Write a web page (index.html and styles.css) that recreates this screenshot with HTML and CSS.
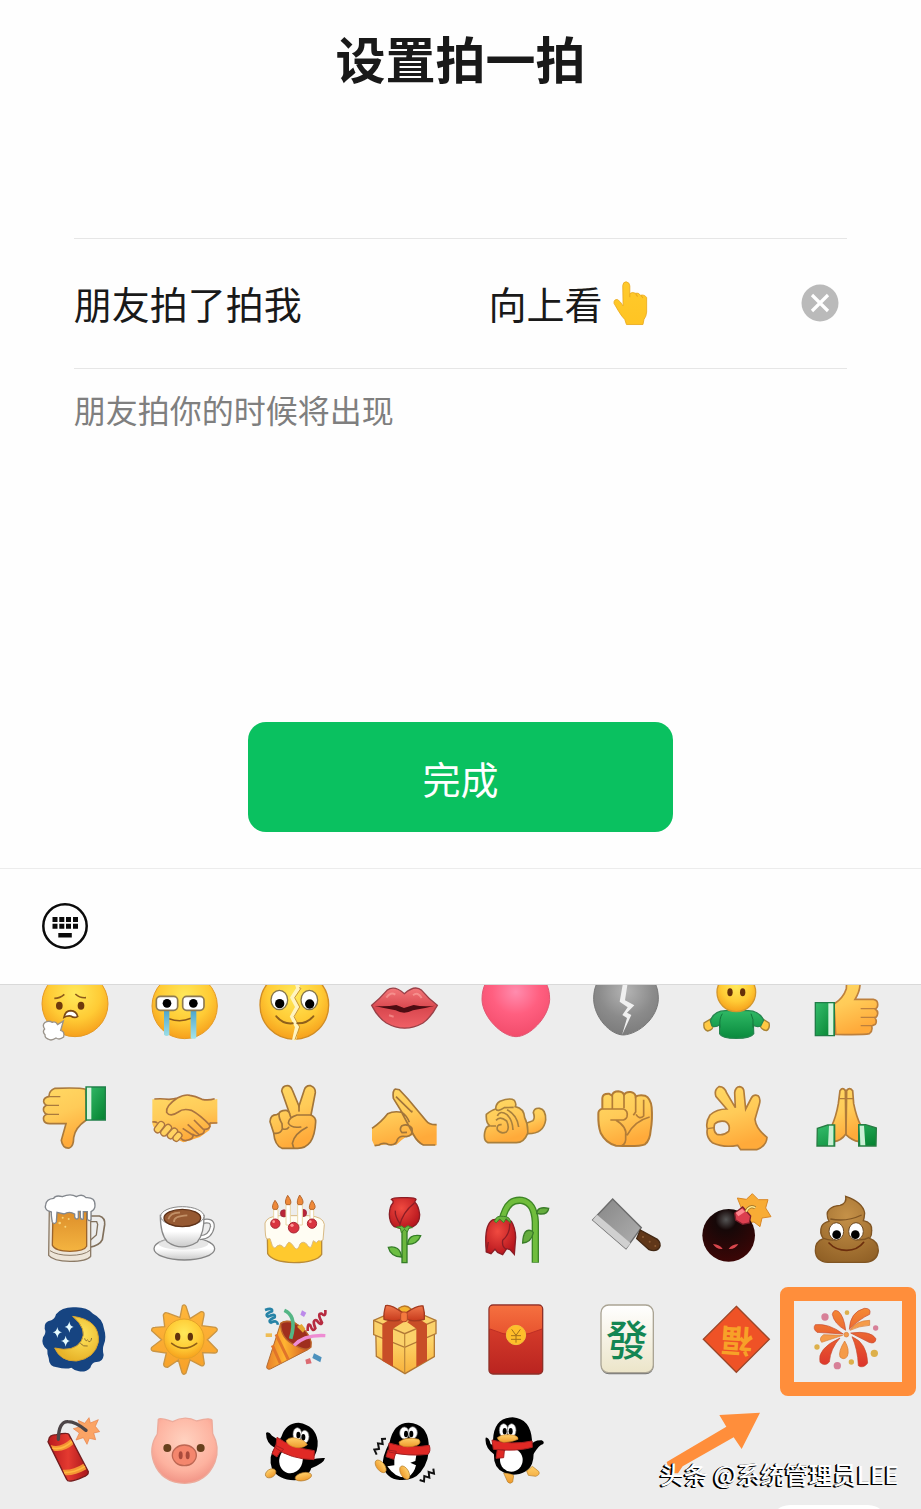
FILE: index.html
```html
<!DOCTYPE html>
<html lang="zh-CN">
<head>
<meta charset="utf-8">
<meta name="viewport" content="width=device-width, initial-scale=1">
<title>设置拍一拍</title>
<link rel="stylesheet" href="styles.css">
</head>
<body>
<svg class="defs" aria-hidden="true">
  <defs>
    <radialGradient id="face" cx=".5" cy=".35" r=".65"><stop offset="0" stop-color="#ffe95a"/><stop offset=".6" stop-color="#ffcb35"/><stop offset="1" stop-color="#f6a01c"/></radialGradient>
    <linearGradient id="skin" x1="0" y1="0" x2=".3" y2="1"><stop offset="0" stop-color="#ffd964"/><stop offset=".5" stop-color="#ffcb58"/><stop offset="1" stop-color="#ffaa3a"/></linearGradient>
    <linearGradient id="point" x1="0" y1="0" x2="0" y2="1"><stop offset="0" stop-color="#ffca2c"/><stop offset="1" stop-color="#ffc423"/></linearGradient>
    <linearGradient id="green" x1="0" y1="0" x2="1" y2="1"><stop offset="0" stop-color="#35bd6c"/><stop offset="1" stop-color="#04812f"/></linearGradient>
    <linearGradient id="shirt" x1="0" y1="0" x2="0" y2="1"><stop offset="0" stop-color="#2fb965"/><stop offset="1" stop-color="#098a3d"/></linearGradient>
    <linearGradient id="tear" x1="0" y1="0" x2="0" y2="1"><stop offset="0" stop-color="#4aa3c9"/><stop offset="1" stop-color="#a5e4ea"/></linearGradient>
    <radialGradient id="heart" cx=".5" cy=".3" r=".7"><stop offset="0" stop-color="#ff8cae"/><stop offset=".5" stop-color="#ff5f80"/><stop offset="1" stop-color="#f24c6b"/></radialGradient>
    <radialGradient id="grey" cx=".5" cy=".3" r=".7"><stop offset="0" stop-color="#b4b4b4"/><stop offset=".6" stop-color="#8b8b8b"/><stop offset="1" stop-color="#7c7c7c"/></radialGradient>
    <linearGradient id="lip" x1="0" y1="0" x2="0" y2="1"><stop offset="0" stop-color="#f4787a"/><stop offset=".5" stop-color="#d9484f"/><stop offset="1" stop-color="#f06066"/></linearGradient>
    <radialGradient id="rose" cx=".4" cy=".35" r=".7"><stop offset="0" stop-color="#f04a40"/><stop offset="1" stop-color="#b5141c"/></radialGradient>
    <linearGradient id="beer" x1="0" y1="0" x2="0" y2="1"><stop offset="0" stop-color="#dd8f2b"/><stop offset="1" stop-color="#f4b440"/></linearGradient>
    <linearGradient id="china" x1="0" y1="0" x2="0" y2="1"><stop offset="0" stop-color="#fff"/><stop offset=".5" stop-color="#fff"/><stop offset="1" stop-color="#c9c9c9"/></linearGradient>
    <linearGradient id="blade" x1="0" y1="0" x2="1" y2="1"><stop offset="0" stop-color="#858585"/><stop offset="1" stop-color="#b0b0b0"/></linearGradient>
    <radialGradient id="bomb" cx=".45" cy=".2" r=".8"><stop offset="0" stop-color="#555"/><stop offset=".25" stop-color="#160808"/><stop offset="1" stop-color="#3c0606"/></radialGradient>
    <radialGradient id="poo" cx=".5" cy=".3" r=".8"><stop offset="0" stop-color="#c59148"/><stop offset="1" stop-color="#8f5f25"/></radialGradient>
    <radialGradient id="moon" cx=".6" cy=".4" r=".6"><stop offset="0" stop-color="#ffe65e"/><stop offset="1" stop-color="#e8b42a"/></radialGradient>
    <linearGradient id="ray" x1="0" y1="0" x2="0" y2="1"><stop offset="0" stop-color="#ffb73c"/><stop offset="1" stop-color="#f7a129"/></linearGradient>
    <linearGradient id="cone" x1="0" y1="0" x2="1" y2="0"><stop offset="0" stop-color="#e8802c"/><stop offset=".4" stop-color="#ffb431"/><stop offset="1" stop-color="#cf511f"/></linearGradient>
    <linearGradient id="gold" x1="0" y1="0" x2="0" y2="1"><stop offset="0" stop-color="#ffe27a"/><stop offset="1" stop-color="#f8b13c"/></linearGradient>
    <linearGradient id="bow" x1="0" y1="0" x2="0" y2="1"><stop offset="0" stop-color="#f0794d"/><stop offset="1" stop-color="#c73a1c"/></linearGradient>
    <linearGradient id="packet" x1="0" y1="0" x2="0" y2="1"><stop offset="0" stop-color="#e2472f"/><stop offset="1" stop-color="#b92420"/></linearGradient>
    <linearGradient id="flap" x1="0" y1="0" x2="0" y2="1"><stop offset="0" stop-color="#f5703f"/><stop offset="1" stop-color="#e8532f"/></linearGradient>
    <linearGradient id="tile" x1="0" y1="0" x2="0" y2="1"><stop offset="0" stop-color="#fff"/><stop offset="1" stop-color="#ece5c9"/></linearGradient>
    <linearGradient id="streak" x1="0" y1="0" x2="0" y2="1"><stop offset="0" stop-color="#f58a35"/><stop offset="1" stop-color="#dd342c"/></linearGradient>
    <linearGradient id="cracker" x1="0" y1="0" x2="1" y2="0"><stop offset="0" stop-color="#b91a1e"/><stop offset=".5" stop-color="#e43a30"/><stop offset="1" stop-color="#a8161b"/></linearGradient>
    <radialGradient id="pig" cx=".5" cy=".35" r=".65"><stop offset="0" stop-color="#ffd2c0"/><stop offset=".7" stop-color="#fdb29f"/><stop offset="1" stop-color="#f19486"/></radialGradient>
    <linearGradient id="beak" x1="0" y1="0" x2="0" y2="1"><stop offset="0" stop-color="#ffd06a"/><stop offset="1" stop-color="#ee9a2c"/></linearGradient>
  </defs>
</svg>

<main class="page">
  <h1 class="title">设置拍一拍</h1>
  <form class="form" onsubmit="return false">
    <div class="row">
      <label class="row-label" for="suffix">朋友拍了拍我</label>
      <div class="row-value">
        <input class="row-input" id="suffix" type="text" value="向上看">
        <svg class="point" viewBox="454 155 110 136" role="img" aria-label="向上指"><path d="M486 171Q487 160 496 160Q506 161 507 172V195Q514 189 524 194Q532 191 539 200Q551 197 557 207V250Q556 263 549 272L546 287H497L492 272Q483 263 474 248L460 224Q459 211 471 213Q479 218 487 232Z" fill="url(#point)" stroke="#e9a91e" stroke-width="2.500"/><path d="M507 195V206M524 195L530 204M540 200L546 208" fill="none" stroke="#e9a91e" stroke-width="3"/></svg>
        <button class="clear" type="button" aria-label="清除"><svg viewBox="0 0 38 38"><circle cx="19" cy="19" r="18.500" fill="#bababa"/><path d="M11 11L27 27M27 11L11 27" stroke="#fff" stroke-width="3.200"/></svg></button>
      </div>
    </div>
    <p class="hint">朋友拍你的时候将出现</p>
    <button class="submit" type="submit">完成</button>
  </form>

  <div class="toolbar">
    <button class="keyboard" type="button" aria-label="键盘"><svg viewBox="0 0 46 46" fill="#0a0a0a"><circle cx="23" cy="23" r="21.700" fill="none" stroke="#0a0a0a" stroke-width="2.500"/><path d="M10.500 14h5v5h-5zM17.300 14h5v5h-5zM24 14h5v5h-5zM31 14h5v5h-5zM10.500 20.700h5v5h-5zM17.300 20.700h5v5h-5zM24 20.700h5v5h-5zM31 20.700h5v5h-5zM16.300 30h13.500v4.500H16.300z"/></svg></button>
  </div>

  <section class="panel" aria-label="表情">
    <div class="grid">
      <button class="emoji" type="button" aria-label="叹气"><svg viewBox="60 2 210 210"><circle cx="165" cy="100" r="99" fill="url(#face)" stroke="#e59a24" stroke-width="3"/><path d="M103 84Q120 84 133 72M166 71Q180 84 198 82" fill="none" stroke="#8d5a1b" stroke-width="5"/><ellipse cx="118" cy="106" rx="10" ry="12" fill="#6f3a0d"/><ellipse cx="183" cy="106" rx="10" ry="12" fill="#6f3a0d"/><path d="M132 141Q136 121 152 121Q169 122 173 138Q165 145 152 137Q140 136 132 141Z" fill="#fff" stroke="#7c4a15" stroke-width="5"/><path d="M130 152L122 180Q135 183 131 200Q119 210 108 203Q94 213 84 206Q74 203 75 193Q66 184 74 176Q66 164 74 157Q86 149 97 156Q106 151 113 163Z" fill="#fff" stroke="#9a938a" stroke-width="4"/></svg></button>
      <button class="emoji" type="button" aria-label="笑哭"><svg viewBox="390 2 210 210"><circle cx="494" cy="107" r="98" fill="url(#face)" stroke="#e59a24" stroke-width="3"/><path d="M447 145Q480 158 513 144" fill="none" stroke="#8d5a1b" stroke-width="5"/><path d="M432 117H448V193Q440 201 432 193ZM512 117H529V203Q520 208 512 203Z" fill="url(#tear)"/><rect x="409" y="78" width="64" height="42" rx="12" fill="#fff" stroke="#8e7a51" stroke-width="5"/><rect x="488" y="78" width="64" height="42" rx="12" fill="#fff" stroke="#8e7a51" stroke-width="5"/><circle cx="441" cy="99" r="13"/><circle cx="520" cy="99" r="13"/></svg></button>
      <button class="emoji" type="button" aria-label="裂开"><svg viewBox="61 2 210 210"><circle cx="164" cy="104" r="103" fill="url(#face)" stroke="#d08d25" stroke-width="4"/><path d="M168 30L176 54L158 82L173 110L157 139L172 170L163 210" fill="none" stroke="#fff4c0" stroke-width="12"/><path d="M178 52L184 54L165 82L180 110L163 139L180 170L166 208" fill="none" stroke="#c99635" stroke-width="3"/><path d="M110 138Q130 162 159 159M173 159Q202 160 221 138" fill="none" stroke="#90601b" stroke-width="6" stroke-linecap="round"/><ellipse cx="119" cy="89" rx="25" ry="29" fill="#fff" stroke="#83744c" stroke-width="4"/><ellipse cx="209" cy="89" rx="25" ry="29" fill="#fff" stroke="#83744c" stroke-width="4"/><circle cx="120" cy="100" r="14"/><circle cx="210" cy="101" r="14"/></svg></button>
      <button class="emoji" type="button" aria-label="嘴唇"><svg viewBox="391 2 210 210"><path d="M396 105Q421 84 442 60Q464 43 494 70Q526 42 546 60Q568 86 593 105Q573 142 550 158Q495 189 440 158Q414 141 396 105Z" fill="url(#lip)" stroke="#9a4148" stroke-width="4"/><path d="M405 107Q440 110 470 104L493 113L522 104Q550 110 586 106Q550 115 520 120Q493 134 468 120Q440 115 405 107Z" fill="#4c0c12"/><path d="M440 82Q453 63 467 73M520 75Q535 63 546 83M448 135L462 139" fill="none" stroke="#ffb3ac" stroke-width="6" opacity=".5"/></svg></button>
      <button class="emoji" type="button" aria-label="爱心"><svg viewBox="62 2 210 210"><path d="M167 30C140-14 64 4 65 88C67 142 126 199 167 199C208 199 265 142 268 88C269 4 195-14 167 30Z" fill="url(#heart)" stroke="#e15773" stroke-width="3"/></svg></button>
      <button class="emoji" type="button" aria-label="心碎"><svg viewBox="392 2 210 210"><path d="M497 30C470-14 398 4 400 88C402 142 450 194 490 194C538 190 591 142 594 88C596 4 525-14 497 30Z" fill="url(#grey)" stroke="#777" stroke-width="3"/><path d="M488 38L478 94L502 111L486 134L500 143L485 194L513 134L500 127L522 105L494 90L502 38Z" fill="#f0f0f0"/></svg></button>
      <button class="emoji" type="button" aria-label="转圈"><svg viewBox="62 2 210 210"><path d="M93 145L71 158Q68 177 82 182Q101 178 99 161ZM244 144L266 158Q270 175 258 181Q239 177 239 162Z" fill="#ffc943" stroke="#a98334" stroke-width="4"/><path d="M90 151Q102 121 135 121H204Q236 122 250 149L241 167Q230 172 219 164L220 190Q212 204 168 204Q124 204 118 190V163Q106 172 95 167Z" fill="url(#shirt)" stroke="#25864f" stroke-width="4"/><path d="M126 130Q116 145 119 172M212 130Q221 145 218 172" fill="none" stroke="#12773b" stroke-width="3"/><circle cx="168" cy="66" r="58" fill="url(#face)" stroke="#d3972d" stroke-width="4"/><ellipse cx="149" cy="66" rx="8" ry="12" fill="#663009"/><ellipse cx="187" cy="66" rx="8" ry="12" fill="#663009"/></svg></button>
      <button class="emoji" type="button" aria-label="强"><svg viewBox="393 2 210 210"><path d="M462 101Q490 83 499 55L500 26Q525 10 540 34Q542 60 525 87H580Q593 89 593 101Q594 112 586 116Q596 124 592 134Q590 141 585 142Q592 154 586 162L575 167Q579 182 568 190Q550 194 467 192Z" fill="url(#skin)" stroke="#bd803d" stroke-width="5"/><path d="M542 115H586M542 141H586M542 166H578" stroke="#bd803d" stroke-width="4"/><path d="M406 97H463V196H406Z" fill="url(#green)" stroke="#207c47" stroke-width="4"/><path d="M445 99H460V194H445Z" fill="#d7f5e0"/></svg></button>

      <button class="emoji" type="button" aria-label="弱"><svg viewBox="60 335 210 210"><path d="M197 357Q180 351 105 354Q87 361 87 378Q70 382 71 394Q72 402 79 405Q68 411 71 422Q74 430 80 432Q68 437 71 449Q74 460 89 460H138L124 510Q128 535 148 533Q161 528 161 502Q165 472 199 449Z" fill="url(#skin)" stroke="#aa7a3d" stroke-width="5"/><path d="M85 379H121M80 405H117M80 432H117" stroke="#aa7a3d" stroke-width="4"/><path d="M198 350H256V449H198Z" fill="url(#green)" stroke="#218049" stroke-width="4"/><path d="M201 352H214V447H201Z" fill="#d9f3e0"/></svg></button>
      <button class="emoji" type="button" aria-label="握手"><svg viewBox="390 335 210 210"><path d="M397 387Q430 385 447 387L472 383L495 374Q515 373 546 387Q566 392 592 386V458L573 462L568 480L540 500L515 508L490 516L410 478Q396 469 397 456Z" fill="url(#skin)"/><path d="M397 455Q407 453 412 458M592 458H571Q566 460 570 469Q564 479 552 477Q556 489 540 493Q530 500 520 493Q519 507 504 509Q490 514 483 504M550 477L522 449M537 493L503 462M518 494L488 474M403 386Q425 384 447 387Q462 386 472 383Q495 371 510 375Q525 377 546 387Q566 391 584 385M472 383Q436 407 440 426Q450 442 475 425Q489 413 514 420Q539 433 571 466" fill="none" stroke="#ab7440" stroke-width="5"/><g fill="#ffd261" stroke="#ab7440" stroke-width="4"><rect x="400" y="461" width="37" height="20" rx="10" transform="rotate(-53 418 471)"/><rect x="419" y="470" width="39" height="20" rx="10" transform="rotate(-50 438 480)"/><rect x="439" y="480" width="36" height="19" rx="9" transform="rotate(-48 457 489)"/><rect x="457" y="490" width="30" height="19" rx="9" transform="rotate(-48 472 499)"/></g></svg></button>
      <button class="emoji" type="button" aria-label="胜利"><svg viewBox="61 335 210 210"><path d="M126 362Q128 346 143 346Q153 346 158 359L178 407L194 358Q199 344 213 346Q228 351 227 367L214 434Q229 441 228 455Q226 495 212 515Q198 534 174 534H127Q105 525 102 488L91 454Q92 433 111 433L118 429Q122 419 140 420L148 425Z" fill="url(#skin)" stroke="#a2753a" stroke-width="5"/><path d="M148 425L154 443M178 407V422M118 431Q117 443 127 460L128 475Q124 491 105 489M128 475Q142 480 147 471M214 434H172Q147 442 146 458Q153 474 183 470M202 471Q164 490 158 519L162 533" fill="none" stroke="#a2753a" stroke-width="5" stroke-linecap="round"/></svg></button>
      <button class="emoji" type="button" aria-label="抱拳"><svg viewBox="391 335 210 210"><path d="M397 474Q430 445 444 430Q460 421 486 426L462 389Q456 366 467 356L481 359L570 461L591 464V525H551Q530 516 520 495L502 498Q482 511 470 523L449 520L432 523L405 527L397 510Z" fill="url(#skin)"/><path d="M397 474Q426 454 444 430Q462 421 487 426L461 384Q458 360 467 356L479 358L505 386L560 452Q569 464 591 463M469 379L508 417Q519 430 516 421M486 426L522 494Q534 516 551 524H587M405 526L418 524Q430 515 448 523Q470 526 473 508Q480 494 500 499Q522 496 517 474Q505 459 487 466Q477 477 487 487L502 486M487 426Q502 436 509 456" fill="none" stroke="#a2753a" stroke-width="5"/></svg></button>
      <button class="emoji" type="button" aria-label="勾引"><svg viewBox="62 335 210 210"><path d="M198 459L218 451Q225 443 219 427Q221 412 238 414Q257 417 256 449Q250 492 199 490Z" fill="url(#skin)" stroke="#a9803d" stroke-width="5"/><path d="M78 432Q94 419 106 416Q106 401 119 393Q149 381 162 390Q169 401 165 409Q191 414 193 442Q204 463 202 489Q190 519 165 517H83Q69 511 73 487Q77 465 90 467Q76 460 78 432Z" fill="url(#skin)" stroke="#a9803d" stroke-width="5"/><path d="M107 416Q110 426 132 412L160 411M90 467H107M107 450Q119 436 139 452Q149 474 138 485Q121 492 111 478Q108 462 124 463M111 437Q119 418 140 433Q157 450 158 479M140 418Q171 434 175 470" fill="none" stroke="#a9803d" stroke-width="5"/></svg></button>
      <button class="emoji" type="button" aria-label="拳头"><svg viewBox="392 335 210 210"><path d="M426 415V383Q427 369 446 370L455 376Q458 363 474 363Q487 364 491 373Q498 363 511 365Q525 368 526 379Q535 373 554 376Q571 384 574 411Q577 448 571 480Q569 510 554 522Q535 530 467 526Q437 519 421 488Q413 466 414 431Q413 419 426 415Z" fill="url(#skin)" stroke="#b27c37" stroke-width="6"/><path d="M456 376V414M491 373V413M526 379V425L519 435M426 416H490Q504 422 500 439Q496 450 481 449H450M467 450Q502 470 496 500Q498 520 484 526M568 440Q522 452 500 495M527 432Q537 449 550 437V388" fill="none" stroke="#b27c37" stroke-width="5"/></svg></button>
      <button class="emoji" type="button" aria-label="OK"><svg viewBox="62 335 210 210"><path fill-rule="evenodd" d="M139 416L107 379Q100 359 116 349Q132 348 139 368L165 412L163 367Q166 349 178 349Q191 351 191 366L196 416L213 383Q220 371 233 376Q242 384 237 402L224 447Q227 475 260 501Q259 527 229 538H181L172 525Q130 533 96 517Q76 500 81 476Q75 456 89 434Q109 416 139 416ZM103 461Q97 483 110 492Q129 497 145 483Q152 462 133 453Q114 450 103 461Z" fill="url(#skin)" stroke="#b17c3b" stroke-width="5"/><path d="M81 475L103 472" stroke="#b17c3b" stroke-width="4"/></svg></button>
      <button class="emoji" type="button" aria-label="合十"><svg viewBox="393 335 210 210"><path d="M498 493L496 361Q488 349 480 361L475 400Q468 440 455 467L461 514Q484 511 498 490ZM498 493L500 361Q508 349 518 361L521 400Q529 440 543 467L537 514Q516 511 498 493Z" fill="url(#skin)" stroke="#b17c3b" stroke-width="5"/><path d="M478 385H520M498 357V493" stroke="#b17c3b" stroke-width="4"/><path d="M412 474L443 464H464V527H411ZM589 473L557 463H536V527H588Z" fill="url(#green)" stroke="#287d43" stroke-width="4"/><path d="M447 466H460V525H444ZM539 466H552L556 525H541Z" fill="#cbefd5"/></svg></button>

      <button class="emoji" type="button" aria-label="啤酒"><svg viewBox="60 38 210 210"><path d="M211 107H238Q256 112 254 133L247 178Q239 196 207 201" fill="none" stroke="#81705c" stroke-width="5"/><path d="M213 124H230L233 132L229 164L211 180" fill="none" stroke="#81705c" stroke-width="4"/><path d="M88 85H212V228Q201 243 150 243Q99 242 86 225Z" fill="#ede5d8" stroke="#8c7b67" stroke-width="4"/><path d="M99 94H200V198Q193 213 150 213Q105 213 97 195Z" fill="url(#beer)" stroke="#9b642c" stroke-width="4"/><path d="M90 211Q111 225 150 225Q192 225 210 210" fill="none" stroke="#8c7b67" stroke-width="3"/><path d="M85 92Q73 85 77 73Q79 56 101 54Q107 43 127 49Q152 38 169 49Q187 39 198 52Q226 50 225 76Q225 87 213 94V118Q206 125 202 115V94H190V115Q185 120 181 112V93H175V112Q171 121 164 111V101Q148 91 132 101L111 96L109 125Q103 134 97 125Q93 105 94 95Z" fill="#fff" stroke="#83878d" stroke-width="4"/><g fill="#f9d477"><circle cx="128" cy="112" r="3"/><circle cx="146" cy="116" r="3"/><circle cx="119" cy="128" r="4"/><circle cx="136" cy="139" r="3"/></g></svg></button>
      <button class="emoji" type="button" aria-label="咖啡"><svg viewBox="390 38 210 210"><ellipse cx="493" cy="205" rx="91" ry="34" fill="url(#china)" stroke="#858585" stroke-width="4"/><ellipse cx="490" cy="190" rx="75" ry="18" fill="#d5d5d5" opacity=".6"/><path d="M546 124Q579 116 577 139Q572 170 540 172" fill="none" stroke="#858585" stroke-width="15"/><path d="M546 124Q579 116 577 139Q572 170 540 172" fill="none" stroke="#fff" stroke-width="8"/><path d="M421 105Q421 163 442 184Q484 215 532 185Q553 160 552 105Z" fill="url(#china)" stroke="#888" stroke-width="4"/><ellipse cx="487" cy="108" rx="65" ry="29" fill="#fff" stroke="#888" stroke-width="3"/><ellipse cx="487" cy="113" rx="55" ry="26" fill="#965932" stroke="#5e3219" stroke-width="4"/><path d="M445 117Q451 96 480 97M462 125Q460 107 502 105" fill="none" stroke="#dfb58b" stroke-width="5" opacity=".6"/></svg></button>
      <button class="emoji" type="button" aria-label="蛋糕"><svg viewBox="61 38 210 210"><path d="M83 170H246V222Q230 246 163 247Q98 245 84 220Z" fill="#ffc92e" stroke="#b98b37" stroke-width="4"/><path d="M76 128Q82 108 120 106H207Q251 109 254 132L250 179Q243 184 236 181L230 187L221 181L215 199Q208 205 202 192Q190 180 181 191Q175 211 166 204Q160 194 153 188Q148 181 142 192Q135 208 129 198Q121 190 112 197Q105 209 98 196L91 175L82 176Q76 176 76 128Z" fill="#fffdf3" stroke="#d9ba84" stroke-width="3"/><g fill="#b92539" stroke="#932238" stroke-width="2"><circle cx="133" cy="99" r="11"/><circle cx="190" cy="98" r="11"/></g><g fill="#fff" stroke="#ead8a7" stroke-width="3"><path d="M102 88H115V121H102ZM139 72H152V134H139ZM174 72H188V134H174ZM211 88H222V121H211Z"/></g><g fill="#ef8939" stroke="#b66930" stroke-width="3"><path d="M106 60Q94 79 101 87H112Q121 78 106 60ZM144 45Q133 65 140 73H151Q159 65 144 45ZM180 44Q169 64 175 73H187Q196 65 180 44ZM217 60Q205 79 211 87H223Q232 79 217 60Z"/></g><g fill="#d93440" stroke="#a72936" stroke-width="3"><circle cx="107" cy="130" r="14"/><circle cx="162" cy="142" r="16"/><circle cx="217" cy="130" r="14"/></g><g fill="#ff9a98"><circle cx="102" cy="124" r="4"/><circle cx="157" cy="135" r="5"/><circle cx="212" cy="124" r="4"/></g></svg></button>
      <button class="emoji" type="button" aria-label="玫瑰"><svg viewBox="391 38 210 210"><path d="M487 145H502V247H487Z" fill="#6db73e" stroke="#347d27" stroke-width="4"/><path d="M504 192Q506 160 543 166Q533 192 504 192ZM486 230Q453 229 446 201Q480 194 486 230Z" fill="#6dbe43" stroke="#347d27" stroke-width="4"/><path d="M460 61L455 57Q459 51 494 52Q527 51 529 57L525 65Q537 76 540 103Q540 128 520 139Q496 150 464 139Q449 128 449 102Q450 78 460 68Z" fill="url(#rose)" stroke="#8b1d25" stroke-width="4"/><path d="M524 68Q488 97 480 136M467 91Q465 108 482 132" fill="none" stroke="#8b1d25" stroke-width="4"/><path d="M469 141L486 137L494 143L505 136L518 142L508 143L503 155L494 147L485 157L482 144Z" fill="#6dbc45" stroke="#3f8329" stroke-width="3"/></svg></button>
      <button class="emoji" type="button" aria-label="凋谢"><svg viewBox="62 38 210 210"><path d="M124 125C137 62 163 58 184 60C212 66 223 87 225 125V247" fill="none" stroke="#3e8626" stroke-width="22"/><path d="M124 125C137 62 163 58 184 60C212 66 223 87 225 125V245" fill="none" stroke="#70bd3c" stroke-width="14"/><path d="M229 99Q231 77 265 84Q263 102 240 101ZM215 152Q189 140 187 188Q213 186 219 157Z" fill="#65ad3d" stroke="#3b7d29" stroke-width="4"/><path d="M96 119Q129 111 153 123Q165 142 166 171L162 222L149 208L139 205L127 223L112 216L104 207L92 220L78 215Q70 135 96 119Z" fill="url(#rose)" stroke="#8b1d25" stroke-width="4"/><path d="M148 130Q150 160 127 180Q124 200 138 207M84 185Q81 201 78 214" fill="none" stroke="#8b1d25" stroke-width="4"/><path d="M102 123Q108 104 129 108Q151 108 151 128L137 115L130 127L118 116L108 127Z" fill="#6ab63b" stroke="#3d7d29" stroke-width="3"/></svg></button>
      <button class="emoji" type="button" aria-label="菜刀"><svg viewBox="392 38 210 210"><path d="M457 56L543 142L497 205L397 119Z" fill="url(#blade)" stroke="#6c6c6c" stroke-width="4"/><path d="M397 119L410 103L511 189L497 205Z" fill="#d0d0d0"/><path d="M540 149L591 177Q604 190 597 202Q588 216 566 208L529 175Z" fill="#603719" stroke="#422814" stroke-width="4"/><g fill="#8d5c34"><circle cx="548" cy="170" r="3"/><circle cx="568" cy="184" r="3"/><circle cx="585" cy="197" r="3"/></g></svg></button>
      <button class="emoji" type="button" aria-label="炸弹"><svg viewBox="62 38 210 210"><path d="M171 53L198 57L216 40L234 58L263 58L256 83L272 109L245 113L239 139L221 125L190 128L190 100Z" fill="#f8ac35" stroke="#d98828" stroke-width="3"/><circle cx="145" cy="165" r="79" fill="url(#bomb)"/><path d="M163 99L187 80L211 107L207 128L187 132L166 119Z" fill="#dc3f4f" stroke="#7d202b" stroke-width="4"/><path d="M166 97L185 85L194 94L174 108Z" fill="#ff8890"/><path d="M197 94Q206 73 225 82" fill="none" stroke="#8e6a27" stroke-width="9"/><path d="M197 94Q206 73 225 82" fill="none" stroke="#ffe78c" stroke-width="5"/><path d="M98 191Q119 193 127 206Q108 208 98 191ZM174 191Q153 193 145 206Q164 208 174 191Z" fill="#d9474d"/></svg></button>
      <button class="emoji" type="button" aria-label="便便"><svg viewBox="393 38 210 210"><path d="M447 123Q436 99 447 88Q458 76 480 75Q501 69 497 48Q549 66 554 98Q553 113 550 121Q577 126 575 151Q576 165 569 174Q595 183 595 211Q592 244 555 246H444Q407 243 406 211Q405 183 430 175Q417 157 425 138Q430 127 447 123Z" fill="url(#poo)" stroke="#805523" stroke-width="4"/><path d="M451 116Q499 126 545 104M431 174Q450 182 470 178M528 178Q552 181 568 171" fill="none" stroke="#805523" stroke-width="4"/><ellipse cx="469" cy="153" rx="22" ry="26" fill="#fff" stroke="#6c4922" stroke-width="3"/><ellipse cx="528" cy="153" rx="22" ry="26" fill="#fff" stroke="#6c4922" stroke-width="3"/><circle cx="470" cy="163" r="13"/><circle cx="526" cy="163" r="13"/><path d="M447 188Q467 210 500 210Q533 210 551 186" fill="none" stroke="#6c2e0d" stroke-width="5" stroke-linecap="round"/></svg></button>

      <button class="emoji" type="button" aria-label="月亮"><svg viewBox="60 371 210 210"><path d="M108 402Q126 379 165 381Q200 380 219 400Q248 414 252 445Q260 470 252 491Q246 507 251 524Q249 546 228 545Q215 547 211 562Q197 577 177 573Q164 571 154 562Q138 568 111 561Q87 560 86 533Q81 518 82 508Q62 494 69 471Q80 457 74 445Q71 424 94 420Q105 415 108 402Z" fill="#164481"/><path d="M158 408Q204 447 184 482Q161 517 104 503Q121 543 169 542Q224 534 235 486Q241 419 158 408Z" fill="url(#moon)" stroke="#d6a32f" stroke-width="3"/><path d="M194 474Q197 486 203 478M203 480Q211 491 215 473M181 489Q190 500 203 497" fill="none" stroke="#8e702f" stroke-width="3"/><path d="M148 423Q149 438 161 440Q150 442 148 457Q146 442 134 440Q146 438 148 423ZM112 440Q114 454 126 456Q114 458 112 473Q110 458 98 456Q110 454 112 440ZM137 466Q139 480 150 482Q139 484 137 499Q135 484 123 482Q135 480 137 466Z" fill="#e5fbff"/></svg></button>
      <button class="emoji" type="button" aria-label="太阳"><svg viewBox="390 371 210 210"><path d="M480 412L487 377Q493 370 498 378L510 415L543 394Q554 393 552 405L546 436L586 441Q595 446 590 452L562 478L592 509Q593 518 583 518L548 517L553 550Q551 559 543 556L510 539L498 578Q491 586 486 577L475 539L443 561Q431 561 431 551L439 518L398 512Q391 509 395 501L425 478L395 451Q394 441 405 441L434 439L430 404Q434 394 442 398Z" fill="url(#ray)" stroke="#ca9544" stroke-width="4"/><circle cx="492" cy="476" r="60" fill="url(#face)" stroke="#e4a129" stroke-width="3"/><ellipse cx="473" cy="469" rx="8" ry="12" fill="#62320c"/><ellipse cx="511" cy="469" rx="8" ry="12" fill="#62320c"/><path d="M455 489Q492 518 530 489" fill="none" stroke="#905f18" stroke-width="5" stroke-linecap="round"/></svg></button>
      <button class="emoji" type="button" aria-label="庆祝"><svg viewBox="61 371 210 210"><path d="M123 429Q135 417 165 426Q215 463 214 488Q215 500 205 508L92 566Q81 569 81 559Z" fill="url(#cone)" stroke="#b36b30" stroke-width="3"/><path d="M123 429Q122 476 168 496Q202 515 214 500Q219 468 185 440Q147 414 123 429Z" fill="#9f2f1e" stroke="#bd672c" stroke-width="4"/><path d="M109 462L146 538M98 495L122 549" stroke="#e0742a" stroke-width="9"/><path d="M153 475Q165 436 157 414Q151 397 134 390" fill="none" stroke="#54b685" stroke-width="11"/><path d="M163 495Q195 462 257 466" fill="none" stroke="#ee8cd3" stroke-width="10"/><path d="M76 389Q100 381 97 393Q73 402 85 409Q109 397 105 411Q82 421 94 427Q112 417 115 433" fill="none" stroke="#2783a6" stroke-width="8"/><path d="M204 452Q203 426 212 435Q219 457 227 444Q216 416 231 420Q244 437 247 427Q231 397 246 400Q259 413 257 389" fill="none" stroke="#b62b40" stroke-width="8"/><path d="M187 390L200 397L193 410L182 403Z" fill="#bc8aea"/><path d="M78 459H97V470H78Z" fill="#efbd55"/><path d="M172 439L186 431L197 445L190 457Z" fill="#e5a733"/><path d="M223 519L246 531L242 546L218 533Z" fill="#4c91bd"/><path d="M197 538L211 533L216 549L200 552Z" fill="#dc6b72"/></svg></button>
      <button class="emoji" type="button" aria-label="礼物"><svg viewBox="391 371 210 210"><path d="M408 440L495 480L584 440V529L496 580L410 528Z" fill="url(#gold)" stroke="#b17936" stroke-width="4"/><path d="M402 420L495 380L589 420V460L495 501L402 463Z" fill="#fbd26a" stroke="#b17936" stroke-width="4"/><path d="M402 420L495 460L589 420" fill="none" stroke="#b17936" stroke-width="4"/><path d="M428 431L462 411L492 425L460 445V559L428 541ZM530 445L502 425L530 411L562 431V541L530 559Z" fill="#c84e27"/><path d="M495 460V578" stroke="#c28d3c" stroke-width="4"/><path d="M477 384Q497 369 514 386L503 399H484Z" fill="#f3b42f" stroke="#b87529" stroke-width="4"/><path d="M489 397Q451 370 438 376Q431 400 433 417Q467 426 486 417ZM500 397Q534 373 550 377Q556 399 554 417Q521 426 502 417Z" fill="url(#bow)" stroke="#a33a20" stroke-width="4"/><rect x="483" y="395" width="20" height="29" rx="7" fill="#f4793e" stroke="#b34825" stroke-width="3"/></svg></button>
      <button class="emoji" type="button" aria-label="红包"><svg viewBox="62 371 210 210"><rect x="86" y="374" width="161" height="207" rx="12" fill="url(#packet)" stroke="#8d3028" stroke-width="4"/><path d="M88 445V386Q88 376 98 376H235Q245 376 245 386V445Q167 483 88 445Z" fill="url(#flap)"/><path d="M89 446Q167 483 245 446" fill="none" stroke="#bd2d24" stroke-width="3"/><circle cx="167" cy="464" r="29" fill="#ffbe2a" stroke="#f3c03b" stroke-width="3"/><path d="M154 447L167 465L180 447M152 466H182M152 477H182M167 465V487" fill="none" stroke="#a5711b" stroke-width="3"/></svg></button>
      <button class="emoji" type="button" aria-label="发"><svg viewBox="392 371 210 210"><rect x="422" y="375" width="158" height="207" rx="24" fill="#777"/><rect x="422" y="374" width="157" height="203" rx="23" fill="url(#tile)" stroke="#aaa494" stroke-width="4"/><text class="tile-text" x="500" y="526" text-anchor="middle">發</text></svg></button>
      <button class="emoji" type="button" aria-label="福"><svg viewBox="62 371 210 210"><path d="M168 378L267 477L168 576L69 477Z" fill="#ef5226" stroke="#9b472a" stroke-width="4"/><text class="fu-text" x="166" y="510" text-anchor="middle" transform="rotate(184 168 478)">福</text></svg></button>
      <button class="emoji marked" type="button" aria-label="烟花"><svg viewBox="393 371 210 210"><g fill="url(#streak)" stroke="#c64a2e" stroke-width="2"><path d="M497 450Q462 430 457 402Q461 385 475 393Q492 407 497 450ZM508 447Q510 395 553 384Q575 383 569 402Q541 414 508 447ZM490 461L411 456Q397 444 406 433Q445 428 490 461ZM480 473Q451 505 448 545Q435 560 420 546Q410 505 480 473ZM516 469Q561 487 563 548Q550 566 535 556Q533 506 516 469ZM512 458Q572 450 588 475Q586 493 567 486Z"/></g><g fill="#f59b49" stroke="#d67832" stroke-width="2"><path d="M488 465L425 486Q415 473 431 463ZM510 450Q529 420 569 420V435Q536 437 510 450ZM494 482Q510 508 502 528Q492 541 480 530Q474 514 494 482Z"/><circle cx="499" cy="463" r="7"/></g><g fill="#d78098"><circle cx="435" cy="410" r="11"/><circle cx="587" cy="443" r="8"/><circle cx="472" cy="556" r="11"/></g><g fill="#ddb04b"><circle cx="501" cy="397" r="7"/><circle cx="411" cy="500" r="8"/><circle cx="514" cy="545" r="8"/><circle cx="583" cy="519" r="11"/></g></svg></button>

      <button class="emoji" type="button" aria-label="爆竹"><svg viewBox="60 704 210 210"><path d="M207 712L211 728L235 718L226 738L239 754L221 758L227 778L208 774L201 792L190 772L168 779L178 758L160 745L181 739L174 720L194 729Z" fill="#fba465" stroke="#e77e45" stroke-width="2"/><path d="M86 780Q87 763 109 763Q145 755 147 763L205 874Q206 886 187 891Q144 910 140 897L84 784Z" fill="url(#cracker)" stroke="#741d1e" stroke-width="4"/><path d="M92 794Q122 804 152 776L160 792Q134 816 101 811ZM128 868Q158 871 190 850L199 867Q166 886 136 885Z" fill="#f49634"/><path d="M97 803Q126 811 156 784M132 877Q165 877 195 858" fill="none" stroke="#ffb93f" stroke-width="5"/><path d="M115 777Q116 723 144 724Q166 724 198 750" fill="none" stroke="#4d4547" stroke-width="10" stroke-linecap="round"/></svg></button>
      <button class="emoji" type="button" aria-label="猪头"><svg viewBox="390 704 210 210"><path d="M412 761L415 717Q420 711 458 724Q494 704 530 722Q572 710 576 720L578 760Q601 801 585 845Q560 907 494 909Q425 907 402 847Q385 801 412 761Z" fill="url(#pig)" stroke="#edab9b" stroke-width="4"/><circle cx="442" cy="803" r="12" fill="#67401d"/><circle cx="542" cy="803" r="12" fill="#67401d"/><ellipse cx="493" cy="825" rx="36" ry="31" fill="#f4866d" stroke="#bd6753" stroke-width="4"/><ellipse cx="482" cy="825" rx="6" ry="12" fill="#a94a3c"/><ellipse cx="503" cy="825" rx="6" ry="12" fill="#a94a3c"/></svg></button>
      <button class="emoji" type="button" aria-label="跳跳"><svg viewBox="61 704 210 210"><path d="M105 802Q79 789 79 758Q86 751 97 766L118 780ZM213 838Q235 832 256 833Q253 850 211 865Z"/><path d="M125 769Q139 727 177 727Q228 735 234 782Q236 814 218 836Q221 885 174 899Q119 903 97 865Q84 827 109 796Z"/><ellipse cx="154" cy="839" rx="35" ry="40" fill="#fff" transform="rotate(15 154 839)"/><path d="M112 771Q155 802 224 811L223 838Q151 836 108 803ZM108 795L132 807Q116 818 112 830L97 820Z" fill="#e02925" stroke="#a91f20" stroke-width="3"/><g fill="#fff" stroke="#777" stroke-width="2"><ellipse cx="173" cy="762" rx="13" ry="20"/><ellipse cx="195" cy="769" rx="13" ry="19"/></g><ellipse cx="176" cy="764" rx="6" ry="10"/><ellipse cx="191" cy="771" rx="6" ry="10"/><path d="M139 781Q151 767 174 775Q195 779 203 793Q185 808 160 799Q143 793 139 781Z" fill="url(#beak)" stroke="#d58b28" stroke-width="2"/><ellipse cx="93" cy="879" rx="17" ry="12" transform="rotate(-32 93 879)" fill="url(#beak)" stroke="#ad7729" stroke-width="2"/><ellipse cx="191" cy="889" rx="25" ry="12" transform="rotate(-12 191 889)" fill="url(#beak)" stroke="#ad7729" stroke-width="2"/></svg></button>
      <button class="emoji" type="button" aria-label="发抖"><svg viewBox="391 704 210 210"><path d="M450 785Q462 727 507 727Q563 731 567 789Q572 840 543 875Q521 902 480 899Q439 895 430 856Q426 831 450 785Z"/><path d="M464 820L530 824L527 842L512 847L529 855Q524 878 506 890Q469 897 443 858L464 855Z" fill="#fff"/><path d="M448 788Q506 806 569 795Q574 813 565 822Q510 829 448 815ZM445 809L470 813L462 837L439 829Z" fill="#e02925" stroke="#a91f20" stroke-width="3"/><g fill="#fff" stroke="#777" stroke-width="2"><ellipse cx="494" cy="758" rx="14" ry="18"/><ellipse cx="519" cy="757" rx="14" ry="18"/></g><ellipse cx="499" cy="761" rx="6" ry="10"/><ellipse cx="515" cy="761" rx="6" ry="10"/><path d="M478 785Q500 767 537 777Q547 788 532 795Q500 805 480 793Z" fill="url(#beak)" stroke="#d58b28" stroke-width="2"/><ellipse cx="423" cy="858" rx="22" ry="12" transform="rotate(52 423 858)" fill="url(#beak)" stroke="#b57d28" stroke-width="2"/><ellipse cx="495" cy="877" rx="22" ry="12" transform="rotate(61 495 877)" fill="url(#beak)" stroke="#b57d28" stroke-width="2"/><path d="M439 775L427 776L429 791L415 789L418 806L404 808L411 823M540 899L553 903L554 887L569 892L567 875L583 880L581 865" fill="none" stroke="#111" stroke-width="6"/></svg></button>
      <button class="emoji" type="button" aria-label="转圈圈"><svg viewBox="62 704 210 210"><path d="M101 822Q72 801 76 772Q85 770 91 791L108 799ZM209 797Q219 779 244 780Q254 784 248 792Q239 790 219 822Z"/><path d="M98 780Q100 712 157 711Q210 715 215 779Q225 823 215 850Q202 882 156 883Q109 877 102 841Z"/><ellipse cx="153" cy="839" rx="34" ry="35" fill="#fff"/><path d="M95 779Q154 795 215 782L216 801Q172 814 99 807ZM111 807L132 810L130 832L107 834Z" fill="#e02925" stroke="#a91f20" stroke-width="3"/><g fill="#fff" stroke="#777" stroke-width="2"><ellipse cx="130" cy="750" rx="13" ry="20"/><ellipse cx="154" cy="750" rx="13" ry="20"/></g><ellipse cx="133" cy="753" rx="6" ry="10"/><ellipse cx="151" cy="753" rx="6" ry="10"/><path d="M111 772Q126 759 162 765Q175 769 173 777Q155 786 130 786Q114 783 111 772Z" fill="url(#beak)" stroke="#d58b28" stroke-width="2"/><path d="M130 878Q156 881 160 886L157 905Q149 913 142 905ZM199 872L216 858L235 873Q241 883 226 888L204 885Z" fill="url(#beak)" stroke="#b57d28" stroke-width="2"/></svg></button>
    </div>
    <svg class="arrow" viewBox="30 30 300 198" aria-hidden="true"><path d="M330 38L208 45L229 80L50 186L60 220H84L98 199L251 112L275 147Z" fill="#ff8e3b"/></svg>
    <p class="watermark">头条 @系统管理员LEE</p>
    <span class="pill"></span>
  </section>
</main>
</body>
</html>
```

FILE: styles.css
```css
* {
  box-sizing: border-box;
}

body {
  margin: 0;
  background: #fefefe;
  color: #191919;
  font-family: "Noto Sans CJK SC", "Noto Sans", sans-serif;
}

button {
  padding: 0;
  border: 0;
  background: none;
  font: inherit;
  cursor: pointer;
}

svg {
  display: block;
}

.defs {
  position: absolute;
  width: 0;
  height: 0;
}

.page {
  display: flex;
  flex-direction: column;
  min-height: 100vh;
}

.title {
  margin: 0;
  padding-top: 20px;
  font-size: 50px;
  line-height: 74px;
  font-weight: 700;
  text-align: center;
}

.form {
  display: flex;
  flex-direction: column;
  margin: 144px 8% 36px;
}

.row {
  display: grid;
  grid-template-columns: 415fr 359fr;
  align-items: center;
  padding: 35px 0 37px;
  border-top: 1px solid #e6e6e6;
  border-bottom: 1px solid #e6e6e6;
}

.row-label {
  font-size: 38px;
  line-height: 57px;
}

.row-value {
  display: flex;
  align-items: center;
  padding-right: 8px;
}

.row-input {
  width: 124px;
  height: 57px;
  padding: 0;
  border: 0;
  outline: 0;
  background: transparent;
  color: inherit;
  font: inherit;
  font-size: 38px;
  line-height: 57px;
}

.point {
  width: 37px;
  height: 46px;
}

.clear {
  width: 38px;
  height: 38px;
  margin-left: auto;
}

.hint {
  margin: 16px 0 289px;
  color: #7f7f7f;
  font-size: 32px;
  line-height: 48px;
}

.submit {
  align-self: center;
  width: 55%;
  height: 110px;
  border-radius: 18px;
  background: #0ac160;
  color: #fff;
  font-size: 38px;
}

.toolbar {
  display: flex;
  align-items: center;
  height: 116px;
  padding: 0 42px 2px;
  border-top: 1px solid #ececec;
}

.keyboard,
.keyboard svg {
  width: 46px;
  height: 46px;
}

.panel {
  position: relative;
  flex: 1;
  overflow: hidden;
  border-top: 1px solid #d9d9d9;
  background: #ededed;
}

.grid {
  display: grid;
  grid-template-columns: repeat(8, 1fr);
  grid-auto-rows: 111px;
  margin-top: -35px;
  padding: 0 20px;
}

.emoji {
  position: relative;
  display: flex;
  align-items: center;
  justify-content: center;
}

.emoji svg {
  width: 70px;
  height: 70px;
  overflow: visible;
}

.marked::after {
  content: "";
  position: absolute;
  inset: 4px -15px -2px -11px;
  border: 14px solid #ff8e3b;
  border-radius: 8px;
}

.tile-text {
  fill: #138653;
  font-family: "Noto Sans CJK TC", sans-serif;
  font-size: 126px;
  font-weight: 500;
}

.fu-text {
  fill: #f7a128;
  font-size: 96px;
  font-weight: 700;
}

.arrow {
  position: absolute;
  right: 161px;
  bottom: 33px;
  width: 100px;
  height: 66px;
}

.watermark {
  position: absolute;
  right: 22px;
  bottom: 17px;
  margin: 0;
  color: #fff;
  font-size: 24px;
  line-height: 36px;
  font-weight: 500;
  text-shadow: -1px 1px 0 #000, -1px 0 0 #000, -2px 1px 0 #000;
}

.pill {
  position: absolute;
  right: 33px;
  bottom: -36px;
  width: 118px;
  height: 40px;
  border-radius: 20px;
  background: #fff;
}
```
